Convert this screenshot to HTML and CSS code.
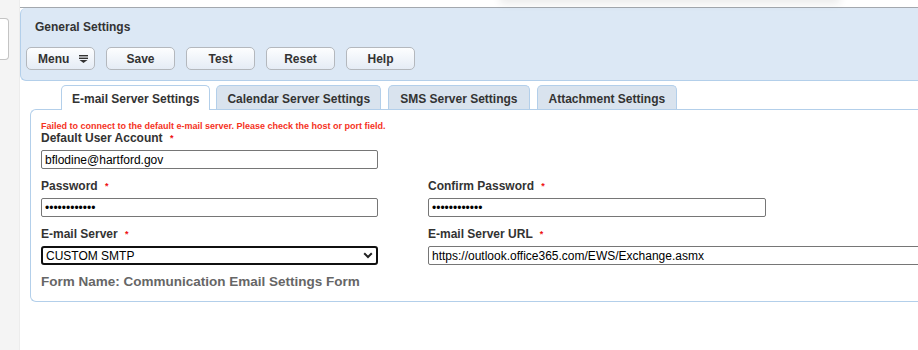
FILE: index.html
```html
<!DOCTYPE html>
<html lang="en">

<head>
    <meta charset="UTF-8">
    <meta name="viewport" content="width=device-width, initial-scale=1.0">
    <title>Communication Email Settings</title>
    <link rel="stylesheet" href="styles.css">
</head>

<body>
    <div class="page">
        <aside class="side">
            <div class="side-card"></div>
        </aside>

        <main class="main">
            <div class="menu-shadow"></div>
            <div class="top-line"></div>

            <div class="settings-panel">
                <h2 class="panel-title">General Settings</h2>
                <div class="btn-row">
                    <button type="button" class="tool-btn menu-btn">
                        Menu
                        <svg class="menu-icon" width="9" height="8" viewBox="0 0 9 8">
                            <rect x="0" y="0" width="9" height="1.4" fill="#333" />
                            <rect x="0" y="2.6" width="9" height="1.4" fill="#333" />
                            <polygon points="0.5,5 8.5,5 4.5,8" fill="#333" />
                        </svg>
                    </button>
                    <button type="button" class="tool-btn">Save</button>
                    <button type="button" class="tool-btn">Test</button>
                    <button type="button" class="tool-btn">Reset</button>
                    <button type="button" class="tool-btn">Help</button>
                </div>
            </div>

            <div class="tabs-area">
                <div class="tabs">
                    <div class="tab active">E-mail Server Settings</div>
                    <div class="tab">Calendar Server Settings</div>
                    <div class="tab wide">SMS Server Settings</div>
                    <div class="tab wide">Attachment Settings</div>
                </div>

                <div class="tab-panel">
                    <div class="error-message">Failed to connect to the default e-mail server. Please check the host or port field.</div>

                    <form id="email-settings-form" class="form-grid" action="#" method="post">
                        <div class="form-group">
                            <label for="user-account">Default User Account <span class="req">*</span></label>
                            <input type="text" id="user-account" class="field-input" value="bflodine@hartford.gov">
                        </div>
                        <div></div>

                        <div class="form-group">
                            <label for="password">Password <span class="req">*</span></label>
                            <input type="password" id="password" class="field-input" value="hartford2024">
                        </div>
                        <div class="form-group">
                            <label for="confirm-password">Confirm Password <span class="req">*</span></label>
                            <input type="password" id="confirm-password" class="field-input confirm-input" value="hartford2024">
                        </div>

                        <div class="form-group">
                            <label for="server">E-mail Server <span class="req">*</span></label>
                            <div class="select-wrap">
                                <select id="server" class="field-select">
                                    <option>CUSTOM SMTP</option>
                                    <option>EXCHANGE</option>
                                    <option>OFFICE 365</option>
                                </select>
                                <svg class="select-arrow" width="10" height="7" viewBox="0 0 10 7">
                                    <polyline points="1.2,1.2 5,5 8.8,1.2" fill="none" stroke="#222" stroke-width="2" />
                                </svg>
                            </div>
                        </div>
                        <div class="form-group">
                            <label for="server-url">E-mail Server URL <span class="req">*</span></label>
                            <input type="text" id="server-url" class="field-input url-input" value="https://outlook.office365.com/EWS/Exchange.asmx">
                        </div>
                    </form>

                    <div class="form-name">Form Name: Communication Email Settings Form</div>
                </div>
            </div>
        </main>
    </div>
</body>

</html>
```

FILE: styles.css
```css
body {
    font-family: "Liberation Sans", Arial, sans-serif;
    margin: 0;
    padding: 0;
    background-color: #fff;
    color: #333;
    overflow: hidden;
}

.page {
    display: flex;
    width: 1100px;
    height: 350px;
}

.side {
    width: 19px;
    flex: none;
    background-color: #f4f4f4;
    border-right: 1px solid #ececec;
}

.side-card {
    margin-top: 18px;
    width: 8px;
    height: 40px;
    background-color: #fff;
    border: 1px solid #c4c4c4;
    border-left: none;
    border-radius: 0 4px 4px 0;
}

.main {
    position: relative;
    flex: 1;
    padding-top: 7px;
}

.menu-shadow {
    position: absolute;
    left: 480px;
    top: -20px;
    width: 340px;
    height: 20px;
    box-shadow: 0 4px 8px rgba(0, 0, 0, 0.08);
}

.top-line {
    height: 1px;
    background-color: #a3a8ae;
}

.settings-panel {
    background-color: #dce8f5;
    border: 1px solid #b3cfea;
    border-top: none;
    border-right: none;
    border-radius: 6px 0 0 6px;
    padding: 12px 0 10px 5px;
}

.panel-title {
    margin: 0 0 13px 9px;
    font-size: 12px;
    line-height: 14px;
    font-weight: bold;
    color: #333;
}

.btn-row {
    display: flex;
    gap: 11px;
}

.tool-btn {
    width: 69px;
    height: 23px;
    padding: 0;
    font-family: inherit;
    font-size: 12px;
    font-weight: bold;
    color: #333;
    background: linear-gradient(#fdfeff, #e5ecf5);
    border: 1px solid #b4b8bd;
    border-radius: 5px;
    cursor: pointer;
}

.menu-btn {
    display: flex;
    align-items: center;
    padding-left: 11px;
    gap: 10px;
}

.menu-icon {
    display: block;
}

.tabs-area {
    margin-left: 10px;
    margin-top: 4px;
}

.tabs {
    display: flex;
    gap: 6px;
    padding-left: 31px;
}

.tab {
    height: 19px;
    line-height: 19px;
    padding: 4px 10px 0;
    font-size: 12px;
    font-weight: bold;
    color: #333;
    background-color: #d9e3ee;
    border: 1px solid #b3cfea;
    border-bottom: none;
    border-radius: 5px 5px 0 0;
}

.tab.wide {
    padding: 4px 11px 0;
    margin-left: 1px;
}

.tab.active {
    background-color: #fff;
    height: 20px;
    margin-bottom: -1px;
    position: relative;
}

.tab-panel {
    border: 1px solid #b3cfea;
    border-right: none;
    border-radius: 6px 0 0 6px;
    padding: 11px 0 11px 10px;
    height: 169px;
}

.error-message {
    font-size: 9px;
    line-height: 10px;
    font-weight: bold;
    color: #f5321e;
}

.form-grid {
    display: grid;
    grid-template-columns: 387px 560px;
}

.form-group {
    margin-bottom: 10px;
}

.form-group label {
    display: block;
    margin-bottom: 5px;
    font-size: 12px;
    line-height: 14px;
    font-weight: bold;
    color: #333;
}

.req {
    color: #e11;
    font-size: 9px;
    margin-left: 4px;
    vertical-align: 1px;
}

.field-input {
    display: block;
    box-sizing: border-box;
    width: 337px;
    height: 19px;
    padding: 0 3px;
    font-family: inherit;
    font-size: 12px;
    color: #000;
    border: 1px solid #767676;
    border-radius: 2px;
    background-color: #fff;
}

.confirm-input {
    width: 338px;
}

.url-input {
    width: 560px;
}

.select-wrap {
    position: relative;
    width: 337px;
}

.field-select {
    appearance: none;
    display: block;
    box-sizing: border-box;
    width: 337px;
    height: 19px;
    padding: 0 3px;
    font-family: inherit;
    font-size: 12px;
    color: #000;
    border: 2px solid #101010;
    border-radius: 3px;
    background-color: #fff;
}

.select-arrow {
    position: absolute;
    right: 5px;
    top: 6px;
}

.form-name {
    margin-top: -1px;
    font-size: 13.5px;
    line-height: 15px;
    font-weight: bold;
    color: #666;
}
```
